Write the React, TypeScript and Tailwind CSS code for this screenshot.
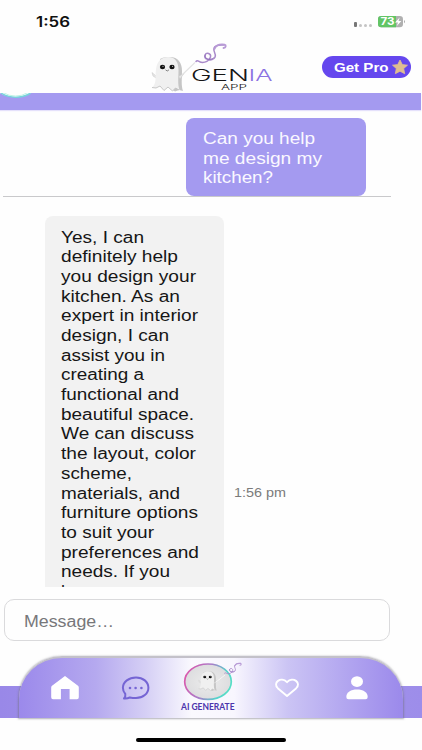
import React from "react";

const question = ["Can you help", "me design my", "kitchen?"];

// Each reply line carries the width it is set to.
const reply: [string, number][] = [
  ["Yes, I can", 83],
  ["definitely help", 117],
  ["you design your", 135],
  ["kitchen. As an", 119],
  ["expert in interior", 137],
  ["design, I can", 108],
  ["assist you in", 104],
  ["creating a", 83],
  ["functional and", 118],
  ["beautiful space.", 133],
  ["We can discuss", 133],
  ["the layout, color", 135],
  ["scheme,", 71],
  ["materials, and", 119],
  ["furniture options", 137],
  ["to suit your", 93],
  ["preferences and", 138],
  ["needs. If you", 109],
  ["have any", 72],
];
const questionWidths = [112, 119, 70];

type WideProps = {
  children: string;
  width: number;
  size: number;
  height: number;
  base: number;
  fill: string;
  weight?: number;
  family?: string;
};

function Wide({ children, width, size, height, base, fill, weight = 400, family = '"Liberation Sans", Arial, sans-serif' }: WideProps) {
  return (
    <svg width={width + 4} height={height} className="block shrink-0 overflow-visible">
      <text x="0" y={base} textLength={width} lengthAdjust="spacingAndGlyphs" fontSize={size} fontWeight={weight} fontFamily={family} fill={fill}>
        {children}
      </text>
    </svg>
  );
}

function GhostShape() {
  return (
    <g>
      <path d="M10 2C14 0 17 0 20 0C28 0 32 6 32 14C32 22 31 28 33 34L29 33L25 34.5L20 31Z" fill="#c6c6c6" />
      <path d="M6 19L2 15.5L3 19L7 21.5M29 19L34 16.5L30 22" fill="#e6e6e6" stroke="#c4c4c4" strokeWidth=".5" />
      <path d="M2 30.5C7 27 5 19 6 12C7 4 12 0 18 0C26 0 28.5 6 28.5 13C28.5 21 27.5 27 29.5 33L25.5 31L22.5 34L18 30L14 33.5L10 29L6 31L2 30.5Z" fill="#f0f0f0" />
      <path d="M2 30.5L6 31L10 29L14 33.5L18 30L22.5 34L25.5 31L29 33" fill="none" stroke="#c2c2c2" strokeWidth=".9" />
      <ellipse cx="12.5" cy="10" rx="2.6" ry="2.2" fill="#111" />
      <ellipse cx="22" cy="10" rx="2.6" ry="2.2" fill="#111" />
      <circle cx="13" cy="9.2" r=".5" fill="#fff" />
      <circle cx="22.6" cy="9.2" r=".5" fill="#fff" />
      <path d="M15.5 12.8Q17.2 15.2 19 12.8" fill="none" stroke="#555" strokeWidth=".7" />
    </g>
  );
}

function Swirl() {
  return (
    <g fill="none" strokeLinecap="round">
      <path d="M1 17.5C2.5 15.5 4 18 6 18.3C10 19 14.5 17 15.5 13C16.3 9.5 11.5 8 10 11C8.5 15 15 17.5 19 14.5C23 11 17.5 8 19 4C20.5 .5 26 1.5 29.5 .8" stroke="#a98aca" strokeWidth="1.5" />
      <path d="M19.5 5C21 1 25 0 29.5 .6C31.5 1.2 31 4 28.5 4" stroke="#b89ad6" strokeWidth="1.8" />
      <path d="M10.2 11C9 15 15 16.7 18.5 14" stroke="#7e57b0" strokeWidth=".7" />
    </g>
  );
}

function Logo() {
  return (
    <svg width="126" height="52" viewBox="0 0 126 52" className="block overflow-visible">
      <g transform="translate(1 15)"><GhostShape /></g>
      <path d="M33 33L46 20.5" stroke="#e2e2e2" strokeWidth="1.1" />
      <g transform="translate(46 2)"><Swirl /></g>
      <g fontFamily='Inter, "Liberation Sans", sans-serif'>
        <text x="42" y="39" textLength="58" lengthAdjust="spacingAndGlyphs" fontSize="15.3" fontWeight="300" fill="#151515">GEN</text>
        <text x="99.5" y="39" textLength="24" lengthAdjust="spacingAndGlyphs" fontSize="15.3" fontWeight="300" fill="#8b72e2">IA</text>
        <text x="72" y="48.3" textLength="26" lengthAdjust="spacingAndGlyphs" fontSize="7" fontWeight="300" fill="#222">APP</text>
      </g>
    </svg>
  );
}

function GenerateIcon() {
  return (
    <svg width="60" height="40" viewBox="0 0 60 40" className="block overflow-visible">
      <defs>
        <linearGradient id="ring" x1="0" y1=".3" x2="1" y2=".6">
          <stop stopColor="#dc58ad" /><stop offset=".45" stopColor="#a97cc9" /><stop offset=".8" stopColor="#55d2cb" /><stop offset="1" stopColor="#56dfc5" />
        </linearGradient>
        <radialGradient id="plate"><stop stopColor="#ececec" /><stop offset="1" stopColor="#dddddf" /></radialGradient>
      </defs>
      <ellipse cx="24" cy="20.7" rx="23.3" ry="17.7" fill="url(#plate)" stroke="url(#ring)" strokeWidth="1.7" />
      <g transform="translate(13.5 10.3) scale(.58 .57)">
        <GhostShape />
      </g>
      <path d="M32 21L41 14" stroke="#f6f6f6" />
      <g transform="translate(40 2) scale(.56 .58)"><Swirl /></g>
    </svg>
  );
}

function StatusBar() {
  return (
    <div className="flex h-[42px] items-start justify-between pt-[12px] pr-[16px] pl-[36px]">
      <Wide width={34} size={14.5} height={20} base={14.5} fill="#111" weight={600} family="Inter, sans-serif">1:56</Wide>
      <div className="flex items-center pt-[4px]">
        <div className="mr-[6px] flex h-[11px] items-end gap-[2px] pb-[0.5px]">
          <i className="h-[5px] w-[3.5px] rounded-[1px] bg-[#777]" />
          <i className="h-[3px] w-[3px] rounded-full bg-[#c4c4c4]" />
          <i className="h-[3px] w-[3px] rounded-full bg-[#c4c4c4]" />
          <i className="h-[3px] w-[3px] rounded-full bg-[#c4c4c4]" />
        </div>
        <svg width="28" height="12" viewBox="0 0 28 12" className="overflow-visible">
          <rect x="0" y="0" width="25" height="11.2" rx="3.2" fill="#b0b0b0" />
          <path d="M3.2 0H18V11.2H3.2A3.2 3.2 0 0 1 0 8V3.2A3.2 3.2 0 0 1 3.2 0Z" fill="#62c565" />
          <text x="2.6" y="9.4" textLength="14" lengthAdjust="spacingAndGlyphs" fontSize="10.3" fontWeight="700" fontFamily="Inter, sans-serif" fill="#fff">73</text>
          <path d="M21.7 1.5L17 6.4H20L18.8 10L23.4 5H20.5Z" fill="#fff" />
          <path d="M26 4Q28 5.6 26 7.2Z" fill="#aaa" />
        </svg>
      </div>
    </div>
  );
}

export default function App() {
  return (
    <div className="flex h-[750px] w-[422px] flex-col overflow-hidden bg-[#fefefe]">
      <StatusBar />
      <header className="flex h-[51px] shrink-0 items-start">
        <div className="ml-[149px] w-[173px]"><Logo /></div>
        <button className="mt-[13.5px] flex h-[22.5px] w-[88.5px] items-center rounded-full bg-[#6547ee] pl-[12px]">
          <Wide width={54.5} size={12.6} height={16} base={12.6} fill="#fff" weight={700}>Get Pro</Wide>
          <svg width="18" height="16" viewBox="0 0 17 16" className="-ml-[2px] shrink-0">
            <path d="M8.5 1L10.8 5.6L16 6.2L12.2 9.5L13.2 14.7L8.5 12.2L3.8 14.7L4.8 9.5L1 6.2L6.2 5.6Z" fill="#dfbd91" stroke="#dfbd91" strokeWidth=".8" strokeLinejoin="round" />
          </svg>
        </button>
      </header>

      <div className="h-[17px] w-[421px] shrink-0 bg-[#a49af0] shadow-[0_1px_1px_#e5e1fb]">
        <svg width="34" height="17" className="block">
          <path d="M0 0Q6 4 15.5 4Q24 4 31 0Z" fill="#fefefe" />
          <path d="M1 0Q7 4.2 15.5 4.2Q24 4.2 30.5 0" fill="none" stroke="#78d4dc" strokeWidth="1.5" />
          <path d="M4 0Q9 3 15.5 3Q22 3 27 0" fill="none" stroke="#c2f4e5" strokeWidth="1" />
        </svg>
      </div>

      <main className="h-[477px] shrink-0 overflow-hidden pt-[8px]">
        <div className="ml-[3px] flex w-[388px] justify-end border-b border-[#c9c9cb] pr-[25px]">
          <div className="h-[78px] w-[180px] rounded-[8px] bg-[#a49af0] pt-[11px] pl-[17px]">
            {question.map((line, i) => (
              <Wide key={line} width={questionWidths[i]} size={15.8} height={19.6} base={15.3} fill="#faf8ff">{line}</Wide>
            ))}
          </div>
        </div>
        <div className="mt-[19px] ml-[45px] flex">
          <div className="h-[371px] w-[179px] overflow-hidden rounded-t-[8px] bg-[#f2f2f2] pt-[11.6px] pl-[16px]">
            {reply.map(([line, width]) => (
              <Wide key={line} width={width} size={15.8} height={19.7} base={15.3} fill="#161616">{line}</Wide>
            ))}
          </div>
          <div className="mt-[269px] ml-[10px]">
            <Wide width={52} size={12.3} height={16} base={12.2} fill="#7b7b7b">1:56 pm</Wide>
          </div>
        </div>
      </main>

      <div className="mt-[12px] ml-[4px] flex h-[42px] w-[386px] shrink-0 items-center rounded-[10px] border border-[#dadadc] bg-[#fefefe] pl-[19px]">
        <Wide width={90} size={15.8} height={20} base={16.5} fill="#77777a">Message…</Wide>
      </div>

      <div className="mt-[15px] grid h-[62px] shrink-0 grid-cols-1 grid-rows-1">
        <div className="col-start-1 row-start-1 h-[32px] self-end bg-linear-to-r from-[#9988e8] via-[#a99bea] to-[#9d8dea]" />
        <nav className="z-10 col-start-1 row-start-1 mr-[19px] ml-[19px] flex h-[62px] items-start rounded-t-[43px] border-t-2 border-[#c3c1c9] bg-[linear-gradient(90deg,#9b89eb_0%,#b5a9ef_20%,#d5cff5_33%,#faf9fe_45%,#f8f6fe_56%,#cbc4f4_70%,#b4a8f0_84%,#9b89eb_100%)] shadow-[0_0.5px_2px_0.5px_rgba(115,115,125,0.55)]">
          <svg width="28" height="24" viewBox="0 0 28 24" className="mt-[18px] ml-[32px] shrink-0">
            <path d="M14 0L27 9.8Q27.8 10.4 27.8 11.5V21.3Q27.8 23.2 26 23.2H18.6V13H9.9V23.2H2Q.2 23.2 .2 21.3V11.5Q.2 10.4 1 9.8Z" fill="#fff" />
          </svg>
          <svg width="29" height="25" viewBox="0 0 29 25" className="mt-[18px] ml-[42px] shrink-0">
            <path d="M15 1.5C22 1.5 27.4 5.8 27.4 11.7S22 22 15 22Q11.5 22 8.8 21.4Q6.5 22.8 3 22.5Q4.8 20.6 4.3 18Q1.9 15.3 1.9 11.7C1.9 5.8 8 1.5 15 1.5Z" fill="none" stroke="#7565d4" strokeWidth="2" strokeLinejoin="round" />
            <g fill="#7565d4"><circle cx="9" cy="12" r="1.3" /><circle cx="14.6" cy="12" r="1.3" /><circle cx="20.4" cy="12" r="1.3" /></g>
          </svg>
          <div className="ml-[31px] w-[57px] shrink-0 pt-[3px]">
            <div className="ml-[3px]"><GenerateIcon /></div>
            <div className="mt-[0.5px]"><Wide width={53.5} size={8.8} height={10} base={8.4} fill="#4b35ac" weight={700} family="Lato, sans-serif">AI GENERATE</Wide></div>
          </div>
          <svg width="26" height="20" viewBox="0 0 26 20" className="mt-[20px] ml-[36px] shrink-0">
            <path d="M13 18L4 10.4C-2 4.8 7-2 13 4.2C19-2 28 4.8 22 10.4Z" fill="none" stroke="#fff" strokeWidth="1.9" strokeLinejoin="round" />
          </svg>
          <svg width="22" height="24" viewBox="0 0 22 24" className="mt-[18px] ml-[46px] shrink-0">
            <ellipse cx="11" cy="5.6" rx="6" ry="5.3" fill="#fff" />
            <path d="M.3 21C.3 16 5 13.4 11 13.4S21.7 16 21.7 21Q21.7 23.2 19.5 23.2H2.5Q.3 23.2 .3 21Z" fill="#fff" />
          </svg>
        </nav>
      </div>
      <footer className="flex h-[32px] shrink-0 justify-center pt-[19.5px]">
        <div className="h-[4.5px] w-[150px] rounded-full bg-black" />
      </footer>
    </div>
  );
}
